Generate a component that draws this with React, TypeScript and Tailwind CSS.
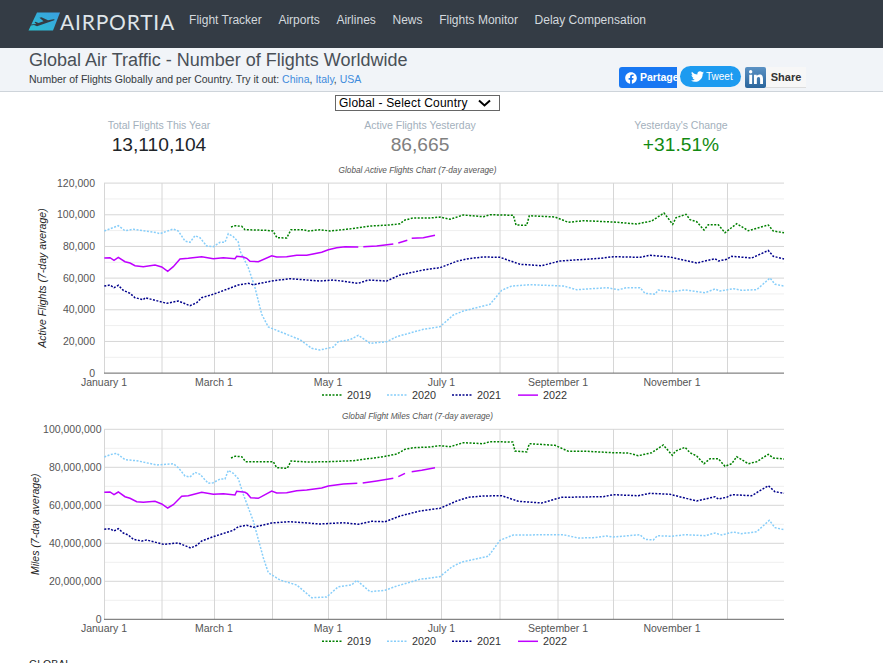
import React from "react";
import { FaFacebook, FaLinkedinIn, FaTwitter } from "react-icons/fa";

const FONT = "Liberation Sans, Arial, sans-serif";
const GREEN = "#008000";
const SKY = "#87cefa";
const NAVY = "#00008b";
const PURPLE = "#bf00ff";

const navItems = ["Flight Tracker", "Airports", "Airlines", "News", "Flights Monitor", "Delay Compensation"];
const xTicks = [104.5, 162, 214.5, 272.5, 328.5, 386.5, 441.5, 500, 558, 613.5, 672.5, 727.5];
const xLabels: [string, number][] = [
  ["January 1", 104],
  ["March 1", 214],
  ["May 1", 328],
  ["July 1", 441.5],
  ["September 1", 558],
  ["November 1", 672],
];
const legend: [string, string, string, number][] = [
  ["2019", GREEN, "2 1.5", 322],
  ["2020", SKY, "2 1.5", 387],
  ["2021", NAVY, "2 1.5", 452],
  ["2022", PURPLE, "", 518],
];

const active = {
  green:
    "231,226 235,224.7 241.7,225.3 245,228.7 266.7,229.3 273,230 277,236.7 286.7,237 291,228.7 303,228.7 308,230 320,228.7 330,230 346.7,228.3 370,225 390,224 400,222.7 405,219 413,217 430,217 440,216 450,218.3 463.3,214 483.3,215.7 490,213.7 513.3,214.3 516,224 526.7,224.3 529.3,214.7 555,216 568.3,221.3 583.3,219.7 613.3,221 636.7,223 651.7,220 664,212 672.7,223.3 676,216.7 686,213.3 690,218.7 696.7,220.7 704,229 708.3,223.7 718.3,223.7 725,231.7 736.7,222.7 748.3,229.7 768.3,224 773.3,230 784,231.7",
  sky: "104.3,230 118.3,224.7 125,229.7 133.3,228.3 156.7,231.7 160,232.7 173.3,228 178.3,230 185,240 190,241.3 195,234.7 200,236.7 206.7,245 213.3,245.7 220,241.3 225,241.3 228.3,232.7 233.3,235.7 238.3,241 240,250 248.3,266.7 255,286.7 261.7,313.3 268.3,326 293.3,336 300,338.7 311.7,347.3 320,349 333.3,346 338.3,340.7 350,338.7 358.3,334.3 370,342.3 386.7,340.7 396.7,335.7 423.3,328.3 440,325.7 453.3,314 463.3,310 490,303.3 501.7,289.3 511.7,285 530,283.7 563.3,285 576.7,288.7 606.7,286.7 618.3,288.7 626.7,286.7 640,286.7 645,292.3 655,293.3 658.3,289 671.7,290.7 685,289 705,291.7 715,288 720,290 733.3,287.7 741.7,289.3 756.7,288.7 770,277 775,283.3 784,285",
  navy: "104.3,285 110,284 114,286.7 118.3,284.3 123.3,289.3 130,292.3 135,296.7 143.3,298.7 145,296.7 166.7,302.3 178.3,300 190,304.7 196.7,301.7 201.7,296.7 213.3,293.3 238.3,284 248.3,282.3 253.3,283.7 273.3,279.7 290,277.7 320,280 333.3,279 358.3,282.3 368.3,279 386.7,280 400,274 423.3,269 440,266.7 456.7,260.3 468.3,257.7 483.3,256 500,256.3 520,263.3 541.7,264.7 560,260 600,257.3 613.3,255.7 640,256.3 650,254.3 670,256 696.7,262 715,257.7 718.3,260 726.7,258.3 731.7,255.3 751.7,257 768.3,249.5 773.3,255.3 784,258",
  purple: [
    "104.3,257 110,256.7 114,259.3 118.3,256.3 125,260.7 130,262 135,264.7 143.3,265.7 155,264 161.7,266 167.7,270.3 173.3,265.7 180,258 188.3,257.3 201.7,255.7 213.3,257.7 223.3,256.7 235,257.7 236.7,255.3 243.3,256 246.7,257.3 250,260.3 258.3,260.7 271.7,254.7 276.7,256 286.7,255.7 296.7,254.3 306.7,254.3 321.7,251.3 328.3,248.7 336.7,246.7 345,245.7 358.3,246",
    "363.3,245.7 376.7,245 393.3,243",
    "398.3,242 407.3,239.3",
    "411.7,237.3 423.3,236.7 435,234.3",
  ],
};

const miles = {
  green:
    "231,457 235,455.3 241.7,455.7 245.7,460.7 273.3,460.7 276.7,466.7 287.3,467.3 291,460 306.7,461 328.3,460.7 353.3,459.7 383.3,455.7 396.7,453 405,448.3 413.3,446.7 430,446 440,444.7 450,445.7 463.3,441.7 483.3,442.7 490,440.7 512.7,441 515,450 526.7,451 529.3,442.7 555,444.3 568.3,450.3 586.7,450.3 613.3,451.7 628.3,452 638.3,454.7 651.7,451.7 663.3,444 672.3,454.3 675.7,450 685,446.3 690,451.7 696.7,455 704,462.7 710,457.7 718.3,457.7 725,465.3 731.7,462.7 736.7,455.7 748.3,462.7 756.7,460.7 768.3,453.3 773.3,457 784,458",
  sky: "104.3,456 110,453.7 116.7,452.3 125,458.7 136.7,459.7 156.7,464 173.3,462.7 178.3,466.7 185,475 190,476 195,471.3 200,473.3 208.3,482.3 213.3,481.7 220,478 225,478 228.3,469.3 233.3,472.3 238.3,477.7 243.3,493.3 248.3,506.7 253.3,520 258.3,538.3 263.3,556.7 268.3,571.7 280,579 296.7,584 311.7,596.7 326.7,596 338.3,585.7 351.7,584 356.7,579.3 370,590.7 385,589.3 396.7,585 420,578.3 440,575.7 451.7,566 461.7,561 488.3,555.3 500,539.3 513.3,534 563.3,533.7 578.3,537 593.3,536.7 606.7,535 613.3,536 640,533.7 645,538.3 653.3,539 657.3,534.7 671.7,535.3 685,533.7 705,534.7 715,532 721.7,534 733.3,531 741.7,532.7 756.7,530.7 769.3,519.3 775,526.7 784,528.7",
  navy: "104.3,528.3 110,527.7 114,530 118.3,527.7 123.3,532 128.3,534 133.3,538.3 141.7,540 146.7,539 163.3,543.3 178.3,542 190.7,547 196.7,544.3 201.7,540 213.3,535.7 233.3,529.3 238.3,525.7 246.7,524.3 253.3,526.3 271.7,522 290,520.7 320,523 343.3,521.7 358.3,523.3 371.7,520.3 385,520.7 400,515 420,510 440,507.3 456.7,500 468.3,496.3 483.3,495 501.7,494.7 518.3,500.3 541.7,502 561.7,496.3 603.3,495.7 613.3,493.7 638.3,494.7 650,492.3 670,493.3 696.7,500 715,495.7 718.3,498 726.7,496.3 731.7,493.7 751.7,494.7 768.3,484.7 775,490.7 784,492.3",
  purple: [
    "104.3,491.3 110,491 114,493.7 118.3,491 125,495.7 130,497.3 136.7,500.7 143.3,501.3 155,500.3 161.7,503 167.7,507 173.3,503.7 181.7,495.3 188.3,494.7 201.7,491.3 213.3,493.3 223.3,492.7 235,494 236.7,490.3 245,491.3 247.3,492.7 250.7,496.7 258.3,497.3 271.7,490 276.7,492 286.7,491.7 296.7,489.7 306.7,489 321.7,487 328.3,485 343.3,483 357.3,482.3",
    "362.7,482 376.7,480 393.3,477.3",
    "398.3,475.7 405,472.3",
    "411.7,470.7 421.7,469.3 435,466.7",
  ],
};

type Series = typeof active;

type ChartProps = {
  title: string;
  axisTitle: string;
  axisX: number;
  labelX: number;
  top: number;
  step: number;
  labels: string[];
  viewY: number;
  viewH: number;
  series: Series;
};

const Chart = ({ title, axisTitle, axisX, labelX, top, step, labels, viewY, viewH, series }: ChartProps) => {
  const count = labels.length - 1;
  const bottom = top + step * count;
  const midY = (top + bottom) / 2;
  return (
    <svg
      width={883}
      height={viewH}
      viewBox={`0 ${viewY} 883 ${viewH}`}
      className="block"
      style={{ fontFamily: FONT }}
    >
      <text x={417.5} y={top - 10} fontSize={8.25} fontStyle="italic" textAnchor="middle" fill="#555">
        {title}
      </text>
      {labels.slice(0, -1).map((_, i) => (
        <line key={i} x1={104} x2={784} y1={top + step * (i + 0.5)} y2={top + step * (i + 0.5)} stroke="#efefef" />
      ))}
      {labels.slice(0, -1).map((_, i) => (
        <line key={i} x1={104} x2={784} y1={top + step * i} y2={top + step * i} stroke="#d6d6d6" />
      ))}
      {xTicks.map((x) => (
        <line key={x} x1={x} x2={x} y1={top} y2={bottom} stroke="#d6d6d6" />
      ))}
      <line x1={104} x2={784} y1={bottom} y2={bottom} stroke="#666" />

      <polyline points={series.green} fill="none" stroke={GREEN} strokeWidth={1.5} strokeDasharray="2 1.5" />
      <polyline points={series.sky} fill="none" stroke={SKY} strokeWidth={1.5} strokeDasharray="2 1.5" />
      <polyline points={series.navy} fill="none" stroke={NAVY} strokeWidth={1.5} strokeDasharray="2 1.5" />
      {series.purple.map((p) => (
        <polyline key={p} points={p} fill="none" stroke={PURPLE} strokeWidth={1.5} />
      ))}

      {labels.map((l, i) => (
        <text key={l} x={labelX} y={top + step * i + 3.4} fontSize={10.5} textAnchor="end" fill="#555">
          {l}
        </text>
      ))}
      {xLabels.map(([l, x]) => (
        <text key={l} x={x} y={bottom + 13} fontSize={10.5} textAnchor="middle" fill="#555">
          {l}
        </text>
      ))}
      <text
        x={axisX}
        y={midY}
        fontSize={10.5}
        fontStyle="italic"
        textAnchor="middle"
        fill="#222"
        transform={`rotate(-90 ${axisX} ${midY})`}
      >
        {axisTitle}
      </text>
      {legend.map(([l, color, dash, x]) => (
        <g key={l}>
          <line x1={x} x2={x + 20} y1={bottom + 22} y2={bottom + 22} stroke={color} strokeWidth={1.5} strokeDasharray={dash} />
          <text x={x + 25} y={bottom + 26} fontSize={10.8} fill="#333">
            {l}
          </text>
        </g>
      ))}
    </svg>
  );
};

const Stat = ({ label, value, color }: { label: string; value: string; color: string }) => (
  <div className="flex flex-col items-center">
    <div className="text-[10.5px] leading-[14px] text-[#a3b0bc]">{label}</div>
    <div className={`pt-[1px] text-[19.2px] leading-[24px] ${color}`}>{value}</div>
  </div>
);

const Logo = () => (
  <div className="flex items-center">
    <svg width={33} height={19} viewBox="0 0 33 19" className="block">
      <defs>
        <linearGradient id="logo" x1="0" y1="1" x2="1" y2="0">
          <stop offset="0" stopColor="#2cc0cf" />
          <stop offset="1" stopColor="#3a9fe2" />
        </linearGradient>
      </defs>
      <path d="M9 0.5H32L25 18.5H0.5Z" fill="url(#logo)" />
      <path d="M2.5 13.5L6 13L9 14.3L25.5 8.5C27 8 27 7 25.5 7.2L20 8.3L13.5 5.2L11.5 5.8L15.5 9.3L10.5 11L7.5 9.8L6.5 10.2L8.2 12L3 12.5Z" fill="#343c44" />
    </svg>
    <span className="-ml-[1px] text-[21px] leading-none tracking-[0.8px] text-[#dfe5e9]" style={{ fontFamily: "Lato, sans-serif" }}>
      AIRPORTIA
    </span>
  </div>
);

export default function App() {
  return (
    <div className="h-[663px] w-[883px] overflow-hidden bg-white" style={{ fontFamily: FONT }}>
      <header className="flex h-[48px] items-start gap-[14px] bg-[#343c45] pl-[28px] pt-[11px]">
        <Logo />
        <nav className="flex gap-[16.7px] pt-[2px] text-[12px] leading-[14px] text-[#d3d9de]">
          {navItems.map((item) => (
            <a key={item}>{item}</a>
          ))}
        </nav>
      </header>

      <div className="flex h-[44px] items-start justify-between border-b border-[#ced4da] bg-[#f1f4f8] pl-[29px] pr-[77px]">
        <div>
          <h1 className="pt-[2px] text-[18px] leading-[20px] text-[#495057]">
            Global Air Traffic - Number of Flights Worldwide
          </h1>
          <p className="pt-[2px] text-[10.5px] leading-[14px] text-[#343a40]">
            Number of Flights Globally and per Country. Try it out:{" "}
            <span className="text-[#3d8bdc]">China</span>, <span className="text-[#3d8bdc]">Italy</span>,{" "}
            <span className="text-[#3d8bdc]">USA</span>
          </p>
        </div>
        <div className="flex items-start gap-[3px] pt-[18px]">
          <div className="mt-[1px] flex h-[21px] w-[58px] items-center gap-[3px] overflow-hidden rounded-l-[3px] bg-[#1877f2] pl-[6px] text-[10.5px] font-bold whitespace-nowrap text-white">
            <FaFacebook className="h-[12px] w-[12px] shrink-0" />
            Partager
          </div>
          <div className="flex h-[21px] w-[61px] items-center gap-[2px] rounded-full bg-[#1d9bf0] pl-[11px] text-[10px] text-white">
            <FaTwitter className="h-[13px] w-[13px] shrink-0" />
            Tweet
          </div>
          <div className="mt-[1px] ml-[1px] flex h-[21px] items-stretch">
            <div className="flex w-[21px] items-center justify-center rounded-[2px] bg-gradient-to-b from-[#5b92c4] to-[#2a659c] text-white">
              <FaLinkedinIn className="h-[16px] w-[16px]" />
            </div>
            <div className="flex w-[40px] items-center justify-center border-b border-[#ddd] bg-[#f7f7f7] text-[11px] font-bold text-[#333]">
              Share
            </div>
          </div>
        </div>
      </div>

      <div className="flex w-[835px] justify-center pt-[3px]">
        <div className="flex h-[16px] w-[165px] items-center justify-between border border-[#666] bg-white pr-[8px] pl-[3px] text-[12px] font-medium text-black">
          <span className="tracking-[0.2px]">Global - Select Country</span>
          <svg width={13} height={8} viewBox="0 0 13 8" className="block">
            <path d="M1 1.5L6.5 6.5L12 1.5" fill="none" stroke="#000" strokeWidth={2} />
          </svg>
        </div>
      </div>

      <div className="ml-[28.5px] grid w-[783px] grid-cols-3 pt-[7px] pb-[8px]">
        <Stat label="Total Flights This Year" value="13,110,104" color="text-[#212529]" />
        <Stat label="Active Flights Yesterday" value="86,665" color="text-[#808080]" />
        <Stat label="Yesterday's Change" value="+31.51%" color="text-[#128a12]" />
      </div>

      <Chart
        title="Global Active Flights Chart (7-day average)"
        axisTitle="Active Flights (7-day average)"
        axisX={46}
        labelX={95}
        top={182.1}
        step={31.67}
        labels={["120,000", "100,000", "80,000", "60,000", "40,000", "20,000", "0"]}
        viewY={164}
        viewH={241}
        series={active}
      />
      <Chart
        title="Global Flight Miles Chart (7-day average)"
        axisTitle="Miles (7-day average)"
        axisX={39}
        labelX={101.5}
        top={428.3}
        step={38}
        labels={["100,000,000", "80,000,000", "60,000,000", "40,000,000", "20,000,000", "0"]}
        viewY={405}
        viewH={246}
        series={miles}
      />

      <div className="pl-[29px] pt-[5px] text-[10.5px] leading-[14px] text-[#212529]">GLOBAL</div>
    </div>
  );
}
